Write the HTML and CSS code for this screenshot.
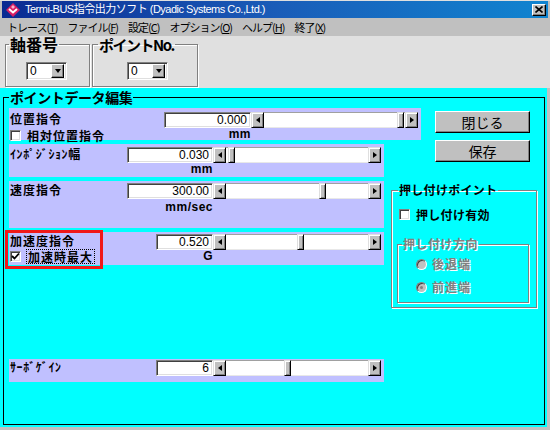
FILE: index.html
```html
<!DOCTYPE html>
<html lang="ja">
<head>
<meta charset="utf-8">
<title>Termi-BUS指令出力ソフト</title>
<link rel="stylesheet" href="styles.css">
</head>
<body>
<div class="window">
  <div class="titlebar">
    <svg class="appicon" width="14" height="14" viewBox="0 0 14 14">
      <polygon points="7,0 14,7 7,14 0,7" fill="#d81e64"/>
      <polyline points="3,6 7,9.5 11,6" fill="none" stroke="#fff" stroke-width="2"/>
      <polygon points="7,2 9,4 7,6 5,4" fill="#f6b0c8"/>
    </svg>
    <span class="title">Termi-BUS指令出力ソフト (Dyadic Systems Co.,Ltd.)</span>
    <span class="closebtn">
      <svg width="8" height="7" viewBox="0 0 8 7"><path d="M0.5 0.5 L7.5 6.5 M7.5 0.5 L0.5 6.5" stroke="#000" stroke-width="1.6"/></svg>
    </span>
  </div>
  <div class="menubar">
    <span class="mitem">トレース(<u>T</u>)</span>
    <span class="mitem">ファイル(<u>F</u>)</span>
    <span class="mitem">設定(<u>C</u>)</span>
    <span class="mitem">オプション(<u>O</u>)</span>
    <span class="mitem">ヘルプ(<u>H</u>)</span>
    <span class="mitem">終了(<u>X</u>)</span>
  </div>
  <div class="toppanel">
    <fieldset class="grp grp-axis">
      <legend>軸番号</legend>
      <div class="combo combo-axis"><span class="combo-val">0</span><span class="combo-btn"><span class="arr-d"></span></span></div>
    </fieldset>
    <fieldset class="grp grp-point">
      <legend>ポイントNo.</legend>
      <div class="combo combo-point"><span class="combo-val">0</span><span class="combo-btn"><span class="arr-d"></span></span></div>
    </fieldset>
  </div>
  <div class="mainarea">
    <fieldset class="editframe">
      <legend>ポイントデータ編集</legend>
      <div class="editbody">
        <div class="rows">
          <div class="prow prow-1">
            <span class="plabel">位置指令</span>
            <span class="tbox">0.000</span>
            <div class="hscroll">
              <span class="sb-btn"><span class="arr-l"></span></span>
              <span class="sb-track"><span class="sb-space" style="width:133px"></span><span class="sb-thumb"></span></span>
              <span class="sb-btn"><span class="arr-r"></span></span>
            </div>
            <span class="chk"><span class="cbox"></span><span class="chk-text">相対位置指令</span></span>
            <span class="unit">mm</span>
          </div>
          <div class="prow prow-2">
            <span class="plabel">ｲﾝﾎﾟｼﾞｼｮﾝ幅</span>
            <span class="tbox">0.030</span>
            <div class="hscroll">
              <span class="sb-btn"><span class="arr-l"></span></span>
              <span class="sb-track"><span class="sb-space" style="width:2px"></span><span class="sb-thumb"></span></span>
              <span class="sb-btn"><span class="arr-r"></span></span>
            </div>
            <span class="chk"></span>
            <span class="unit">mm</span>
          </div>
          <div class="prow prow-3">
            <span class="plabel">速度指令</span>
            <span class="tbox">300.00</span>
            <div class="hscroll">
              <span class="sb-btn"><span class="arr-l"></span></span>
              <span class="sb-track"><span class="sb-space" style="width:93px"></span><span class="sb-thumb"></span></span>
              <span class="sb-btn"><span class="arr-r"></span></span>
            </div>
            <span class="chk"></span>
            <span class="unit unit-3">mm/sec</span>
          </div>
          <div class="prow prow-4">
            <span class="plabel">加速度指令</span>
            <span class="tbox">0.520</span>
            <div class="hscroll">
              <span class="sb-btn"><span class="arr-l"></span></span>
              <span class="sb-track"><span class="sb-space" style="width:71px"></span><span class="sb-thumb"></span></span>
              <span class="sb-btn"><span class="arr-r"></span></span>
            </div>
            <span class="chk chk-4"><span class="cbox"><svg width="9" height="9" viewBox="0 0 9 9"><polyline points="1,4 3.5,6.5 8,1.5" fill="none" stroke="#000" stroke-width="1.8"/></svg></span><span class="chk-text focus">加速時最大</span></span>
            <span class="unit">G</span>
            <span class="redmark"></span>
          </div>
          <div class="prow prow-5">
            <span class="plabel">ｻｰﾎﾞｹﾞｲﾝ</span>
            <span class="tbox">6</span>
            <div class="hscroll">
              <span class="sb-btn"><span class="arr-l"></span></span>
              <span class="sb-track"><span class="sb-space" style="width:58px"></span><span class="sb-thumb"></span></span>
              <span class="sb-btn"><span class="arr-r"></span></span>
            </div>
          </div>
        </div>
        <div class="side">
          <span class="btn btn-close">閉じる</span>
          <span class="btn btn-save">保存</span>
          <fieldset class="grp grp-push">
            <legend>押し付けポイント</legend>
            <span class="chk chk-push"><span class="cbox"></span><span class="chk-text">押し付け有効</span></span>
            <fieldset class="grp grp-dir">
              <legend>押し付け方向</legend>
              <span class="radio radio-1"><span class="rdot"></span><span class="rtext">後退端</span></span>
              <span class="radio radio-2"><span class="rdot on"></span><span class="rtext">前進端</span></span>
            </fieldset>
          </fieldset>
        </div>
      </div>
    </fieldset>
  </div>
</div>
</body>
</html>
```

FILE: styles.css
```css
* { box-sizing: border-box; }

body {
  margin: 0;
  width: 550px;
  height: 430px;
  overflow: hidden;
  background: #c0c0c0;
  font-family: "Noto Sans CJK JP", "Liberation Sans", sans-serif;
  font-size: 12px;
  color: #000;
}

.window {
  width: 550px;
  height: 430px;
  display: flex;
  flex-direction: column;
  border-top: 1px solid #dfdfdf;
}

/* title bar */
.titlebar {
  height: 17px;
  margin: 0 2px;
  display: flex;
  align-items: center;
  padding-left: 4px;
  background: linear-gradient(to right, #0a2a92 0%, #1a5cb8 50%, #1084d0 100%);
}
.appicon { flex: none; }
.title {
  margin-left: 5px;
  color: #fff;
  font-family: "Liberation Sans", "Noto Sans CJK JP", sans-serif;
  font-size: 11px;
  line-height: 17px;
  letter-spacing: -0.5px;
  white-space: nowrap;
}
.closebtn {
  margin-left: auto;
  margin-right: 2px;
  width: 14px;
  height: 12px;
  background: #c0c0c0;
  border: 1px solid;
  border-color: #fff #000 #000 #fff;
  box-shadow: inset -1px -1px #808080;
  display: flex;
  align-items: center;
  justify-content: center;
}

/* menu bar */
.menubar {
  height: 18px;
  background: #c0c0c0;
  display: flex;
  align-items: center;
  gap: 10px;
  padding-left: 7px;
  font-size: 11px;
  line-height: 18px;
  letter-spacing: -1px;
  white-space: nowrap;
}
.mitem { flex: none; }
.menubar u { text-decoration: underline; }

/* top panel */
.toppanel {
  height: 52px;
  background: #e0e0e0;
  display: flex;
  align-items: flex-start;
  padding-left: 5px;
}

.grp {
  margin: 0;
  border: 1px solid #808080;
  box-shadow: inset 1px 1px 0 #fff, 1px 1px 0 #fff;
  padding: 0;
  min-width: 0;
}
.grp > legend {
  font-weight: bold;
  padding: 0 1px;
  margin-left: -1px;
}

.grp-axis, .grp-point {
  height: 51px;
}
.grp-axis { width: 85px; padding-left: 4px; }
.grp-point { width: 106px; margin-left: 2px; padding-left: 6px; }
.grp-axis > legend, .grp-point > legend {
  font-size: 16px;
  line-height: 17px;
}
.grp-point > legend { font-size: 15px; letter-spacing: -1.5px; }

.combo {
  margin-top: 9px;
  width: 41px;
  height: 18px;
  background: #fff;
  border: 1px solid;
  border-color: #808080 #fff #fff #808080;
  box-shadow: inset 1px 1px #404040, inset -1px -1px #dfdfdf;
  display: flex;
  align-items: center;
  padding: 2px;
}
.combo-axis { margin-left: 16px; }
.combo-point { margin-left: 28px; }
.combo-val {
  flex: 1;
  font-family: "Liberation Sans", sans-serif;
  font-size: 12px;
  line-height: 14px;
  padding-left: 1px;
}
.combo-btn {
  width: 13px;
  height: 14px;
  background: #c0c0c0;
  border: 1px solid;
  border-color: #fff #000 #000 #fff;
  box-shadow: inset -1px -1px #808080;
  display: flex;
  align-items: center;
  justify-content: center;
}
.arr-d {
  width: 0; height: 0;
  border-left: 3.5px solid transparent;
  border-right: 3.5px solid transparent;
  border-top: 4px solid #000;
}

/* main area */
.mainarea {
  height: 339px;
  margin-right: 3px;
  background: #00ffff;
  padding: 0 0 2px 3px;
}
.editframe {
  margin: 0;
  height: 337px;
  width: 542px;
  border: 1px solid #000;
  padding: 2px 0 0 5px;
  min-width: 0;
}
.editframe > legend {
  font-size: 14px;
  font-weight: bold;
  line-height: 18px;
  letter-spacing: -0.4px;
  padding: 0 1px;
  margin-left: 0;
}

.editbody {
  display: flex;
  align-items: flex-start;
}
.rows {
  width: 375px;
  flex: none;
  display: flex;
  flex-direction: column;
}

.prow {
  position: relative;
  display: grid;
  grid-template-rows: 16px auto;
  align-content: start;
  background: #c0c0ff;
  margin-top: 4px;
}
.prow-1 { width: 412px; height: 32px; padding-top: 4px; margin-top: 0; grid-template-columns: 155px 87px 167px; }
.prow-2 { width: 375px; height: 33px; padding-top: 3px; grid-template-columns: 118px 86px 168px; }
.prow-3 { width: 375px; height: 47px; padding-top: 2px; grid-template-columns: 118px 86px 168px; }
.prow-4 { width: 375px; height: 33px; padding-top: 2px; grid-template-columns: 147px 57px 168px; }
.prow-5 { width: 375px; height: 23px; padding-top: 1px; margin-top: 94px; grid-template-columns: 147px 57px 168px; }

.plabel {
  font-weight: bold;
  font-size: 12px;
  line-height: 14px;
  letter-spacing: 1px;
  padding-left: 1px;
  white-space: nowrap;
}
.prow-2 .plabel { letter-spacing: 0.6px; }
.prow-5 .plabel { letter-spacing: 0.6px; }

.tbox {
  height: 16px;
  background: #fff;
  border: 1px solid;
  border-color: #808080 #fff #fff #808080;
  box-shadow: inset 1px 1px #404040, inset -1px -1px #dfdfdf;
  text-align: right;
  font-family: "Liberation Sans", sans-serif;
  font-size: 12px;
  line-height: 14px;
  padding-right: 3px;
}

.hscroll {
  height: 16px;
  display: flex;
}
.sb-btn {
  flex: none;
  width: 13px;
  height: 16px;
  background: #c0c0c0;
  border: 1px solid;
  border-color: #dfdfdf #000 #000 #dfdfdf;
  box-shadow: inset 1px 1px #fff, inset -1px -1px #808080;
  display: flex;
  align-items: center;
  justify-content: center;
}
.arr-l, .arr-r {
  width: 0; height: 0;
  border-top: 3.5px solid transparent;
  border-bottom: 3.5px solid transparent;
}
.arr-l { border-right: 4px solid #000; }
.arr-r { border-left: 4px solid #000; }
.sb-track {
  flex: 1;
  display: flex;
  background: #fff;
  border-top: 1px solid #a0a0a0;
  border-bottom: 1px solid #e8e8e8;
}
.sb-space { flex: none; }
.sb-thumb {
  flex: none;
  width: 7px;
  margin-top: -1px;
  margin-bottom: -1px;
  background: #c0c0c0;
  border: 1px solid;
  border-color: #dfdfdf #000 #000 #dfdfdf;
  box-shadow: inset 1px 1px #fff, inset -1px -1px #808080;
}

.chk {
  display: flex;
  align-items: center;
  height: 14px;
  padding-left: 1px;
}
.cbox {
  flex: none;
  width: 11px;
  height: 11px;
  background: #fff;
  border: 1px solid;
  border-color: #808080 #fff #fff #808080;
  box-shadow: inset 1px 1px #404040, inset -1px -1px #dfdfdf;
  display: flex;
  align-items: center;
  justify-content: center;
}
.chk-text {
  margin-left: 6px;
  font-weight: bold;
  font-size: 12px;
  line-height: 13px;
  letter-spacing: 1px;
  white-space: nowrap;
}
.chk-4 { margin-top: -1px; }
.chk-text.focus {
  margin-left: 5px;
  padding: 0 1px;
  border: 1px dotted #000;
}

.unit {
  text-align: right;
  font-family: "Liberation Sans", sans-serif;
  font-weight: bold;
  font-size: 12px;
  line-height: 13px;
  letter-spacing: 0.5px;
}
.unit-3 { padding-top: 2px; }

.redmark {
  position: absolute;
  left: -4px;
  top: -2px;
  width: 98px;
  height: 39px;
  border: 3px solid #f01818;
}

/* side column */
.side {
  flex: none;
  margin-left: 7px;
  width: 146px;
  display: flex;
  flex-direction: column;
  align-items: flex-start;
}
.btn {
  width: 95px;
  height: 22px;
  margin-left: 44px;
  background: #c0c0c0;
  border: 1px solid;
  border-color: #fff #000 #000 #fff;
  box-shadow: inset -1px -1px #808080;
  display: flex;
  align-items: center;
  justify-content: center;
  font-size: 14px;
  line-height: 18px;
}
.btn-close { margin-top: 3px; }
.btn-save { margin-top: 7px; }

.grp-push {
  margin-top: 21px;
  width: 146px;
  height: 125px;
  padding: 0 0 0 7px;
}
.grp-push > legend {
  font-size: 12px;
  line-height: 14px;
  letter-spacing: 0.3px;
}
.chk-push { margin-top: 10px; padding-left: 0; }
.chk-push .chk-text { letter-spacing: 0.3px; }

.grp-dir {
  margin-top: 16px;
  margin-left: -2px;
  width: 132px;
  height: 66px;
  padding: 0 0 0 5px;
  display: flex;
  flex-direction: column;
}
.grp-dir > legend {
  font-size: 12px;
  line-height: 14px;
  color: #808080;
  text-shadow: 1px 1px 0 #fff;
  letter-spacing: 0.5px;
}
.radio {
  display: flex;
  align-items: center;
  height: 14px;
  margin-left: 13px;
}
.radio-1 { margin-top: 6px; }
.radio-2 { margin-top: 9px; }
.rdot {
  flex: none;
  width: 11px;
  height: 11px;
  border-radius: 50%;
  background: #c0c0c0;
  border: 1px solid;
  border-color: #808080 #fff #fff #808080;
  box-shadow: inset 1px 1px #404040;
  display: flex;
  align-items: center;
  justify-content: center;
}
.rdot.on::after {
  content: "";
  width: 3px;
  height: 3px;
  border-radius: 50%;
  background: #808080;
}
.rtext {
  margin-left: 5px;
  font-weight: bold;
  font-size: 12px;
  line-height: 14px;
  letter-spacing: 1px;
  color: #808080;
  text-shadow: 1px 1px 0 #fff;
}
```
